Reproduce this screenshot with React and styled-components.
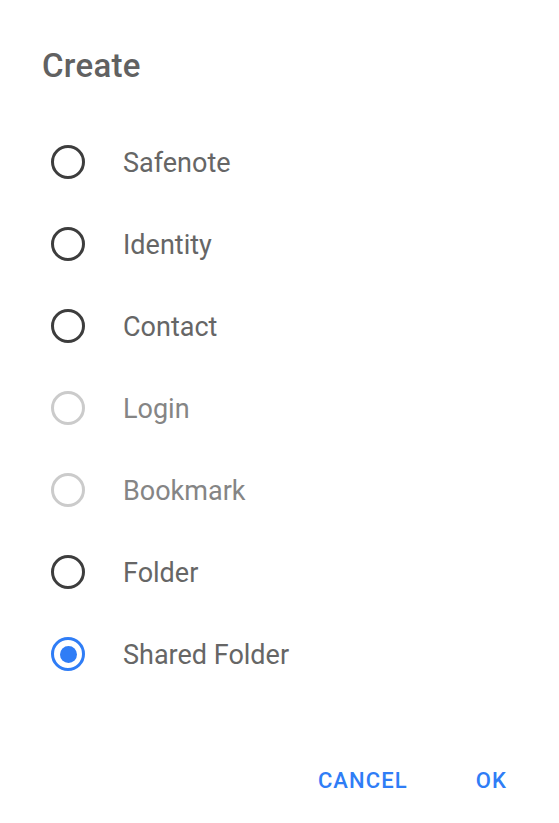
import React, { useState } from "react";
import styled, { createGlobalStyle } from "styled-components";

const GlobalStyle = createGlobalStyle`
  body {
    margin: 0;
    background: #fff;
    font-family: Roboto, "Liberation Sans", sans-serif;
  }
`;

const Dialog = styled.div`
  width: 559px;
  height: 823px;
  background: #fff;
  padding-top: 46px;
  box-sizing: border-box;
`;

const Title = styled.h1`
  margin: 0 0 35px;
  padding-left: 42px;
  font-size: 33px;
  line-height: 40px;
  font-weight: 500;
  letter-spacing: 0.3px;
  color: #616161;
`;

const List = styled.div`
  display: flex;
  flex-direction: column;
`;

const Row = styled.label`
  display: flex;
  align-items: center;
  height: 82px;
  padding-left: 51px;
  cursor: ${(p) => (p.disabled ? "default" : "pointer")};
`;

const Radio = styled.span`
  width: 34px;
  height: 34px;
  box-sizing: border-box;
  border-radius: 50%;
  border: 3px solid
    ${(p) => (p.checked ? "#2f7df6" : p.disabled ? "#cbcbcb" : "#3d3d3d")};
  display: flex;
  align-items: center;
  justify-content: center;
  flex-shrink: 0;

  &::after {
    content: "";
    display: ${(p) => (p.checked ? "block" : "none")};
    width: 17px;
    height: 17px;
    border-radius: 50%;
    background: #2f7df6;
  }
`;

const Label = styled.span`
  margin-left: 38px;
  padding-top: 2px;
  font-size: 27px;
  color: ${(p) => (p.disabled ? "#858585" : "#666666")};
`;

const Footer = styled.div`
  display: flex;
  justify-content: flex-end;
  gap: 36px;
  padding: 68px 36px 0 0;
`;

const Button = styled.button`
  border: none;
  background: none;
  padding: 0 16px;
  font-family: Roboto, "Liberation Sans", sans-serif;
  font-size: 22px;
  line-height: 36px;
  font-weight: 500;
  letter-spacing: 1.1px;
  color: #2f7df6;
  cursor: pointer;
`;

const items = [
  { name: "Safenote" },
  { name: "Identity" },
  { name: "Contact" },
  { name: "Login", disabled: true },
  { name: "Bookmark", disabled: true },
  { name: "Folder" },
  { name: "Shared Folder" },
];

export default function App() {
  const [selected, setSelected] = useState("Shared Folder");

  return (
    <>
      <GlobalStyle />
      <Dialog>
        <Title>Create</Title>
        <List>
          {items.map((it) => (
            <Row
              key={it.name}
              disabled={it.disabled}
              onClick={() => !it.disabled && setSelected(it.name)}
            >
              <Radio checked={selected === it.name} disabled={it.disabled} />
              <Label disabled={it.disabled}>{it.name}</Label>
            </Row>
          ))}
        </List>
        <Footer>
          <Button>CANCEL</Button>
          <Button>OK</Button>
        </Footer>
      </Dialog>
    </>
  );
}
